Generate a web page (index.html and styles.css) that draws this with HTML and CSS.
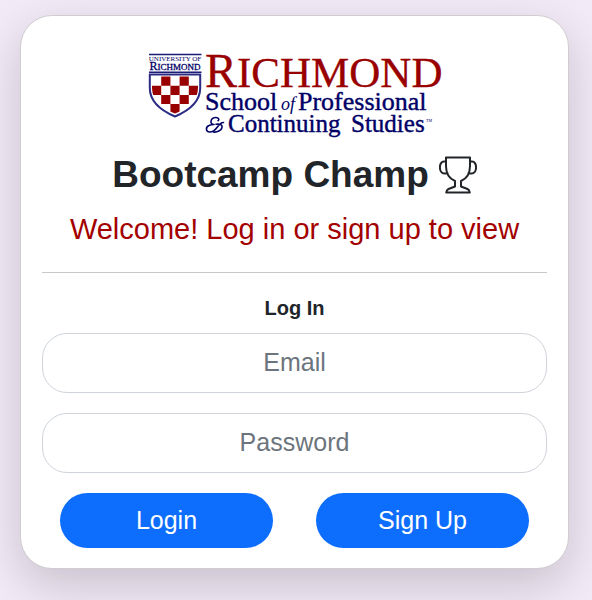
FILE: index.html
```html
<!DOCTYPE html>
<html lang="en">
<head>
<meta charset="utf-8">
<meta name="viewport" content="width=device-width, initial-scale=1">
<title>Bootcamp Champ</title>
<link rel="stylesheet" href="styles.css">
</head>
<body>
<main class="card">
  <svg class="logo" viewBox="0 0 300 90" role="img" aria-label="University of Richmond School of Professional and Continuing Studies">
    <defs>
      <clipPath id="field"><path d="M7 26H53V37C53 51 43 58.500 30 63.500C17 58.500 7 51 7 37Z"/></clipPath>
    </defs>
    <path class="rule" d="M4 4.500H56.500M4 22.200H56.500"/>
    <text class="crest-top" x="30" y="11" text-anchor="middle">UNIVERSITY OF</text>
    <text class="crest-name" x="30" y="20" text-anchor="middle"><tspan class="crest-cap">R</tspan>ICHMOND</text>
    <path class="shield" d="M4.800 24.500V38C4.800 53 17 61 30 66.500C43 61 55.200 53 55.200 38V24.500Z"/>
    <path class="checks" clip-path="url(#field)" d="M16.200 26.500h9.200v9.200h-9.200zM34.600 26.500h9.200v9.200h-9.200zM7 35.700h9.200v9.200h-9.200zM25.400 35.700h9.200v9.200h-9.200zM43.800 35.700h9.200v9.200h-9.200zM16.200 44.900h9.200v9.200h-9.200zM34.600 44.900h9.200v9.200h-9.200zM25.400 54.100h9.200v10h-9.200z"/>
    <text class="brand" x="60" y="37"><tspan class="brand-cap">R</tspan>ICHMOND</text>
    <text class="unit unit-wide" x="60" y="60">School</text>
    <text class="of" x="136" y="60">of</text>
    <text class="unit unit-wide" x="153" y="60">Professional</text>
    <path class="amp" d="M78.500 72.500C76 72.500 74.500 74 72 77.500C69.500 81 67 82 64.700 82C60.500 82 60.500 77 64 75.500C66.500 74.300 69 74.500 69 74.500M69 74.500C64.500 74.800 65 68 70.500 67.500C74 67.300 74.500 70 73 70.700M71 74.200C75 73.800 77.500 74.500 77 77.500C76.500 80.500 72 82.500 68.500 82" role="img" aria-label="and"/>
    <text class="unit" x="83" y="82">Continuing</text>
    <text class="unit" x="206" y="82">Studies</text>
    <text class="tm" x="281" y="72">TM</text>
  </svg>
  <h1 class="title">Bootcamp Champ
    <svg class="trophy" viewBox="0 0 38 38" aria-hidden="true">
      <path d="M7 1.500H31V10C31 18 28 22.500 22 25V30.500L28.500 33Q30.500 34 30.800 36.500H7.200Q7.500 34 9.500 33L16 30.500V25C10 22.500 7 18 7 10ZM7 5.500H5C-0.500 5.500-0.500 17.500 5.500 17.500H9.500M31 5.500H33C38.500 5.500 38.500 17.500 32.500 17.500H28.500"/>
    </svg>
  </h1>
  <p class="welcome">Welcome! Log in or sign up to view</p>
  <hr class="divider">
  <form class="form">
    <h2 class="form-title">Log In</h2>
    <input class="field" type="email" placeholder="Email" aria-label="Email">
    <input class="field" type="password" placeholder="Password" aria-label="Password">
    <div class="actions">
      <button class="button" type="submit">Login</button>
      <button class="button" type="button">Sign Up</button>
    </div>
  </form>
</main>
</body>
</html>
```

FILE: styles.css
```css
* {
  box-sizing: border-box;
}

body {
  margin: 0;
  padding: 15px 23px 31px 20px;
  background: #f2eaf7;
  color: #212529;
  font-family: "Liberation Sans", Arial, sans-serif;
}

.card {
  padding: 34px 21px 20px;
  border: 1px solid #d0cdd1;
  border-radius: 32px;
  background: #fff;
  box-shadow: 0 16px 48px rgba(0, 0, 0, 0.175);
  text-align: center;
}

.logo {
  display: block;
  width: 300px;
  height: 90px;
  margin: 0 auto;
  overflow: visible;
}

.logo text {
  font-family: "Liberation Serif", "Times New Roman", serif;
  fill: #000066;
}

.rule {
  stroke: #1b1b78;
  stroke-width: 1.5;
}

.logo .crest-top {
  font-size: 7px;
}

.logo .crest-name {
  font-size: 9px;
  stroke: #000066;
  stroke-width: 0.3;
}

.logo .crest-cap {
  font-size: 12px;
}

.shield {
  fill: #fff;
  stroke: #2c2c84;
  stroke-width: 2;
}

.checks {
  fill: #990000;
}

.logo .brand {
  font-size: 43px;
  fill: #990000;
  stroke: #990000;
  stroke-width: 0.3;
}

.brand-cap {
  font-size: 48px;
}

.logo .unit {
  font-size: 25px;
  stroke: #000066;
  stroke-width: 0.4;
}

.logo .unit-wide {
  font-size: 26px;
}

.amp {
  fill: none;
  stroke: #000066;
  stroke-width: 1.6;
  stroke-linecap: round;
}

.logo .of {
  font-size: 18px;
  font-style: italic;
}

.logo .tm {
  font-size: 4px;
}

.title {
  display: flex;
  align-items: center;
  justify-content: center;
  gap: 10px;
  margin: 12px 0 0;
  font-size: 37px;
  line-height: 46px;
}

.trophy {
  width: 38px;
  height: 38px;
  fill: none;
  stroke: #212529;
  stroke-width: 2;
  stroke-linejoin: round;
}

.welcome {
  margin: 13px 0 25px;
  color: #a30000;
  font-size: 29px;
  line-height: 36px;
}

.divider {
  margin: 0;
  border: 0;
  border-top: 1px solid #c8c9ca;
}

.form-title {
  margin: 23px 0 13px;
  font-size: 20px;
  line-height: 24px;
}

.field {
  display: block;
  width: 100%;
  height: 60px;
  margin-bottom: 20px;
  padding: 0 20px 2px;
  border: 1px solid #ced4da;
  border-radius: 25px;
  background: #fff;
  color: #212529;
  font: 25px "Liberation Sans", Arial, sans-serif;
  text-align: center;
}

.field::placeholder {
  color: #6c757d;
  opacity: 1;
}

.actions {
  display: grid;
  grid-template-columns: 1fr 1fr;
  gap: 43px;
  padding: 0 18px;
}

.button {
  height: 55px;
  padding: 0;
  border: 0;
  border-radius: 30px;
  background: #0d6efd;
  color: #fff;
  font: 25px "Liberation Sans", Arial, sans-serif;
}
```
